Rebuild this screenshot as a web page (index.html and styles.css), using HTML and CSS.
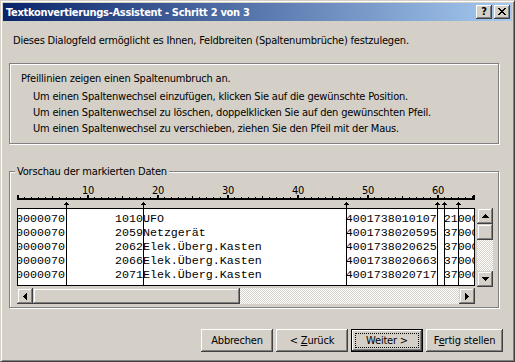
FILE: index.html
```html
<!DOCTYPE html>
<html>
<head>
<meta charset="utf-8">
<link rel="stylesheet" href="styles.css">
</head>
<body>
<div class="window">
  <div class="titlebar">
    <span class="title">Textkonvertierungs-Assistent - Schritt 2 von 3</span>
    <span class="caption-btn help">?</span>
    <span class="caption-btn close">
      <svg width="8" height="7" viewBox="0 0 8 7"><path d="M0 0h2v1H0zM6 0h2v1H6zM1 1h2v1H1zM5 1h2v1H5zM2 2h4v1H2zM3 3h2v1H3zM2 4h4v1H2zM1 5h2v1H1zM5 5h2v1H5zM0 6h2v1H0zM6 6h2v1H6z"/></svg>
    </span>
  </div>

  <div class="content">
    <p class="intro">Dieses Dialogfeld ermöglicht es Ihnen, Feldbreiten (Spaltenumbrüche) festzulegen.</p>

    <div class="group info">
      <p>Pfeillinien zeigen einen Spaltenumbruch an.</p>
      <ul class="hints">
        <li>Um einen Spaltenwechsel einzufügen, klicken Sie auf die gewünschte Position.</li>
        <li>Um einen Spaltenwechsel zu löschen, doppelklicken Sie auf den gewünschten Pfeil.</li>
        <li>Um einen Spaltenwechsel zu verschieben, ziehen Sie den Pfeil mit der Maus.</li>
      </ul>
    </div>

    <div class="group preview">
      <div class="legend">Vorschau der markierten Daten</div>
      <div class="preview-area">
        <div class="sheet">
          <svg class="ruler" width="458" height="27" viewBox="0 0 458 27">
            <defs>
              <pattern id="tick1" width="7" height="1" patternUnits="userSpaceOnUse"><rect width="1" height="1"/></pattern>
              <pattern id="tick5" x="35" width="70" height="2" patternUnits="userSpaceOnUse"><rect width="1" height="2"/></pattern>
              <pattern id="tick10" width="70" height="3" patternUnits="userSpaceOnUse"><rect width="2" height="3"/></pattern>
            </defs>
            <rect x="0" y="16" width="458" height="1" fill="url(#tick1)"/>
            <rect x="0" y="15" width="458" height="2" fill="url(#tick5)"/>
            <rect x="0" y="14" width="458" height="3" fill="url(#tick10)"/>
            <rect x="456" y="14" width="2" height="3"/>
            <rect x="0" y="17" width="458" height="2"/>
            <text x="71" y="13">10</text>
            <text x="141" y="13">20</text>
            <text x="211" y="13">30</text>
            <text x="281" y="13">40</text>
            <text x="351" y="13">50</text>
            <text x="421" y="13">60</text>
          </svg>
          <div class="data">
            <span>0000070</span><span class="num">1010</span><span>UFO</span><span>4001738010107</span><span></span><span>21</span><span>000000</span>
            <span>0000070</span><span class="num">2059</span><span>Netzgerät</span><span>4001738020595</span><span></span><span>37</span><span>000000</span>
            <span>0000070</span><span class="num">2062</span><span>Elek.Überg.Kasten</span><span>4001738020625</span><span></span><span>37</span><span>000000</span>
            <span>0000070</span><span class="num">2066</span><span>Elek.Überg.Kasten</span><span>4001738020663</span><span></span><span>37</span><span>000000</span>
            <span>0000070</span><span class="num">2071</span><span>Elek.Überg.Kasten</span><span>4001738020717</span><span></span><span>37</span><span>000000</span>
          </div>
          <!-- column break arrows, x = 7 * column -->
          <svg class="breaks" width="458" height="105" viewBox="0 0 458 105">
            <defs>
              <path id="brk" d="M0 21h1v1H0zM-1 22h3v1h-3zM-2 23h5v1h-5zM0 24h1v81H0z"/>
            </defs>
            <use href="#brk" x="49"/>
            <use href="#brk" x="126"/>
            <use href="#brk" x="329"/>
            <use href="#brk" x="420"/>
            <use href="#brk" x="427"/>
            <use href="#brk" x="441"/>
          </svg>
        </div>

        <div class="vscroll">
          <div class="sb-btn">
            <svg width="7" height="4" viewBox="0 0 7 4"><path d="M3 0h1v1H3zM2 1h3v1H2zM1 2h5v1H1zM0 3h7v1H0z"/></svg>
          </div>
          <div class="sb-thumb v"></div>
          <div class="sb-track"></div>
          <div class="sb-btn">
            <svg width="7" height="4" viewBox="0 0 7 4"><path d="M0 0h7v1H0zM1 1h5v1H1zM2 2h3v1H2zM3 3h1v1H3z"/></svg>
          </div>
        </div>

        <div class="hscroll">
          <div class="sb-btn">
            <svg width="4" height="7" viewBox="0 0 4 7"><path d="M0 3h1v1H0zM1 2h1v3H1zM2 1h1v5H2zM3 0h1v7H3z"/></svg>
          </div>
          <div class="sb-thumb h"></div>
          <div class="sb-track"></div>
          <div class="sb-btn">
            <svg width="4" height="7" viewBox="0 0 4 7"><path d="M0 0h1v7H0zM1 1h1v5H1zM2 2h1v3H2zM3 3h1v1H3z"/></svg>
          </div>
        </div>
        <div class="corner"></div>
      </div>
    </div>

    <div class="buttons">
      <button class="btn w72"><span>Abbrechen</span></button>
      <button class="btn w72"><span>&lt; <u>Z</u>urück</span></button>
      <button class="btn w72 default"><span class="focus">Weiter &gt;</span></button>
      <button class="btn w77"><span>F<u>e</u>rtig stellen</span></button>
    </div>
  </div>
</div>
</body>
</html>
```

FILE: styles.css
```css
* {
    box-sizing: border-box;
}

body {
    margin: 0;
    background: #d4d0c8;
    font-family: "DejaVu Sans", sans-serif;
    font-stretch: condensed;
    font-size: 11px;
    line-height: 13px;
    letter-spacing: -0.2px;
    color: #000;
}

.window {
    width: 515px;
    height: 362px;
    border: 1px solid;
    border-color: #d4d0c8 #404040 #404040 #d4d0c8;
    box-shadow: inset 1px 1px #fff, inset -1px -1px #808080;
    padding: 2px;
}

/* title bar */

.titlebar {
    display: flex;
    align-items: center;
    height: 18px;
    padding: 0 2px 0 3px;
    background: linear-gradient(to right, #0a246a, #a6caf0);
    color: #fff;
    font-weight: bold;
}

.title {
    flex: 1;
    letter-spacing: -0.3px;
}

.caption-btn {
    display: flex;
    align-items: center;
    justify-content: center;
    width: 16px;
    height: 14px;
    background: #d4d0c8;
    color: #000;
    box-shadow: inset -1px -1px #404040, inset 1px 1px #fff, inset -2px -2px #808080;
}

.help {
    margin-right: 2px;
    padding-bottom: 1px;
    font-size: 11px;
    letter-spacing: 0;
}

.close svg {
    display: block;
    margin-top: -1px;
}

/* body */

.content {
    padding: 13px 6px 0;
}

.intro {
    margin: 0 0 16px 4px;
}

.group {
    width: 490px;
    border: 1px solid #808080;
    box-shadow: inset 1px 1px #fff, 1px 1px #fff;
}

.info {
    height: 81px;
    padding: 8px 0 0 11px;
}

.info p {
    margin: 0;
}

.hints {
    list-style: none;
    margin: 4px 0 0 12px;
    padding: 0;
    line-height: 16px;
}

.preview {
    margin-top: 27px;
    padding: 0 0 3px 7px;
}

.legend {
    width: max-content;
    margin: -7px 0 0 -2px;
    padding: 0 2px;
    background: #d4d0c8;
}

.preview-area {
    display: grid;
    grid-template-columns: 458px 16px;
    column-gap: 2px;
    row-gap: 1px;
    margin-top: 3px;
}

.sheet {
    position: relative;
}

.ruler {
    display: block;
}

.ruler text {
    font-family: "DejaVu Sans", sans-serif;
    font-stretch: condensed;
    font-size: 11px;
    text-anchor: middle;
}

.data {
    display: grid;
    grid-template-columns: calc(7ch - 1px) 11ch 29ch 13ch 1ch 2ch auto;
    grid-auto-rows: 14px;
    height: 78px;
    padding-top: 3px;
    border: 1px solid #000;
    background: #fff;
    overflow: hidden;
    font-family: "Liberation Mono", monospace;
    font-size: 11.6667px;
    line-height: 14px;
    letter-spacing: 0;
    white-space: nowrap;
}

.data span:nth-child(7n+1) {
    margin-left: -2px;
}

.data .num {
    text-align: right;
}

.breaks {
    position: absolute;
    top: 0;
    left: 0;
    shape-rendering: crispEdges;
}

/* scroll bars */

.vscroll {
    display: flex;
    flex-direction: column;
    height: 79px;
    margin-top: 27px;
}

.hscroll {
    display: flex;
    height: 16px;
}

.sb-btn,
.sb-thumb {
    display: flex;
    align-items: center;
    justify-content: center;
    flex: none;
    width: 16px;
    height: 16px;
    background: #d4d0c8;
    box-shadow: inset -1px -1px #404040, inset 1px 1px #d4d0c8, inset -2px -2px #808080, inset 2px 2px #fff;
}

.sb-btn svg {
    display: block;
    shape-rendering: crispEdges;
}

.sb-thumb.h {
    width: 207px;
}

.sb-track {
    flex: 1;
    background-color: #fff;
    background-image: conic-gradient(#fff 25%, #d4d0c8 0 50%, #fff 0 75%, #d4d0c8 0);
    background-size: 2px 2px;
}

/* buttons */

.buttons {
    display: flex;
    justify-content: flex-end;
    gap: 3px;
    margin-top: 21px;
    padding-right: 3px;
}

.btn {
    display: flex;
    align-items: center;
    justify-content: center;
    height: 23px;
    padding: 0;
    border: none;
    background: #d4d0c8;
    font: inherit;
    letter-spacing: inherit;
    color: #000;
    white-space: pre;
    box-shadow: inset -1px -1px #404040, inset 1px 1px #fff, inset -2px -2px #808080;
}

.w72 {
    width: 72px;
}

.w77 {
    width: 77px;
}

.btn.default {
    border: 1px solid #000;
}

.focus {
    display: flex;
    align-items: center;
    justify-content: center;
    align-self: stretch;
    flex: 1;
    margin: 3px;
    border: 1px dotted #000;
}
```
